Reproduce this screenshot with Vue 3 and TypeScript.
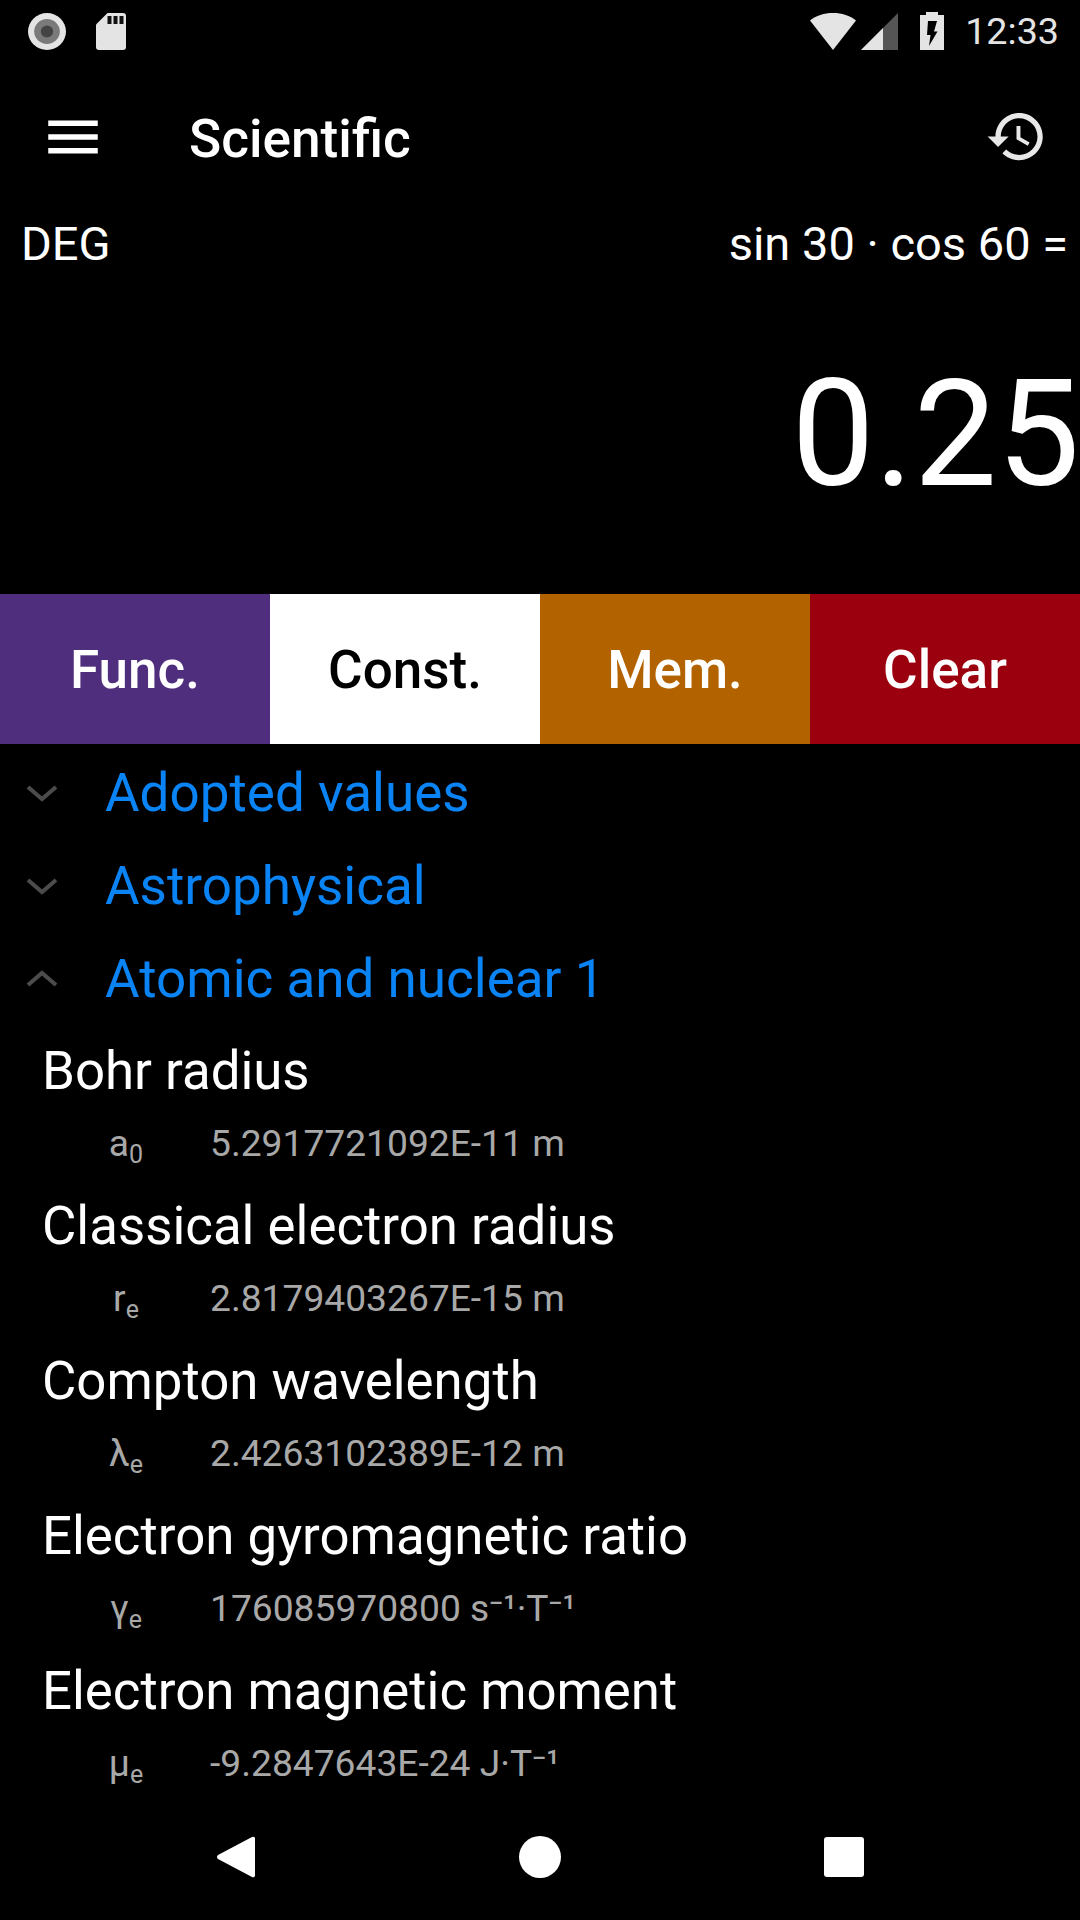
<script setup lang="ts">
interface Constant {
  name: string;
  symbol: string;
  sub: string;
  value: string;
}

const groups = [
  { label: 'Adopted values', open: false },
  { label: 'Astrophysical', open: false },
  { label: 'Atomic and nuclear 1', open: true }
];

const modes = [
  { label: 'Func.', cls: 'func' },
  { label: 'Const.', cls: 'const' },
  { label: 'Mem.', cls: 'mem' },
  { label: 'Clear', cls: 'clear' }
];

const constants: Constant[] = [
  { name: 'Bohr radius', symbol: 'a', sub: '0', value: '5.2917721092E-11 m' },
  { name: 'Classical electron radius', symbol: 'r', sub: 'e', value: '2.8179403267E-15 m' },
  { name: 'Compton wavelength', symbol: 'λ', sub: 'e', value: '2.4263102389E-12 m' },
  { name: 'Electron gyromagnetic ratio', symbol: 'γ', sub: 'e', value: '176085970800 s⁻¹·T⁻¹' },
  { name: 'Electron magnetic moment', symbol: 'μ', sub: 'e', value: '-9.2847643E-24 J·T⁻¹' }
];
</script>

<template>
  <div class="screen">
    <div class="status">
      <svg class="rec" width="38" height="37" viewBox="0 0 37 37" preserveAspectRatio="none">
        <circle cx="18.5" cy="18.5" r="18.5" fill="#e4e4e4" />
        <circle cx="18.5" cy="18.5" r="12.5" fill="#7a7a7a" />
        <circle cx="18.5" cy="18.5" r="6" fill="#444" />
      </svg>
      <svg class="sd" width="30" height="37" viewBox="0 0 30 37">
        <path d="M11.500 0H27a3 3 0 0 1 3 3V34a3 3 0 0 1-3 3H3a3 3 0 0 1-3-3V11.500Z" fill="#e4e4e4" />
        <path d="M11.500 3h4v8h-4zM17.500 3h4v8h-4zM23.500 3h4v8h-4z" fill="#111" />
      </svg>
      <span class="spacer"></span>
      <svg class="wifi" width="46" height="37" viewBox="0 0 46 37">
        <path d="M0 7.500C6 2.500 14 0 23 0s17 2.500 23 7.500L23 37Z" fill="#e4e4e4" />
      </svg>
      <svg class="signal" width="37" height="37" viewBox="0 0 37 37">
        <path d="M37 0V37H0Z" fill="#555" />
        <path d="M22 15V37H0Z" fill="#e4e4e4" />
      </svg>
      <svg class="battery" width="24" height="38" viewBox="0 0 24 38">
        <path d="M6 0h12v3h6v35H0V3h6Z" fill="#e4e4e4" />
        <path d="M8 9H17L14 19.500H17.500L9 34 10.500 23H7Z" fill="#000" />
      </svg>
      <span class="time">12:33</span>
    </div>

    <div class="toolbar">
      <svg class="menu" width="66" height="66" viewBox="0 0 24 24">
        <path d="M3 18h18v-2H3v2zm0-5h18v-2H3v2zm0-7v2h18V6H3z" fill="#fff" />
      </svg>
      <span class="title">Scientific</span>
      <span class="spacer"></span>
      <svg class="history" width="63" height="63" viewBox="0 0 24 24">
        <path d="M13 3c-4.970 0-9 4.030-9 9H1l3.890 3.890.07.14L9 12H6c0-3.870 3.130-7 7-7s7 3.130 7 7-3.130 7-7 7c-1.930 0-3.680-.79-4.940-2.060l-1.420 1.420C8.270 19.990 10.510 21 13 21c4.970 0 9-4.030 9-9s-4.030-9-9-9zm-1 5v5l4.280 2.540.72-1.210-3.500-2.080V8H12z" fill="#e8e8e8" />
      </svg>
    </div>

    <div class="display">
      <div class="info">
        <span>DEG</span>
        <span>sin 30 · cos 60 =</span>
      </div>
      <div class="result">0.25</div>
    </div>

    <div class="modes">
      <div v-for="mode in modes" :key="mode.label" class="mode" :class="mode.cls">{{ mode.label }}</div>
    </div>

    <div class="list">
      <div v-for="group in groups" :key="group.label" class="group">
        <svg class="chevron" width="36" height="24" viewBox="0 0 36 24">
          <path v-if="group.open" d="M4 18 18 6 32 18" />
          <path v-else d="M4 6 18 18 32 6" />
        </svg>
        <span>{{ group.label }}</span>
      </div>
      <div v-for="item in constants" :key="item.name" class="item">
        <div class="name">{{ item.name }}</div>
        <div class="detail">
          <span class="symbol">{{ item.symbol }}<sub>{{ item.sub }}</sub></span>
          <span class="value">{{ item.value }}</span>
        </div>
      </div>
    </div>

    <div class="nav">
      <svg width="38" height="42" viewBox="0 0 38 42">
        <path d="M35 1a2 2 0 0 1 3 2V39a2 2 0 0 1-3 2L1 23a2.500 2.500 0 0 1 0-4Z" fill="#fff" />
      </svg>
      <svg width="42" height="42" viewBox="0 0 42 42">
        <circle cx="21" cy="21" r="21" fill="#fff" />
      </svg>
      <svg width="40" height="40" viewBox="0 0 40 40">
        <rect width="40" height="40" rx="3" fill="#fff" />
      </svg>
    </div>
  </div>
</template>

<style>
body {
  background: #000;
}
</style>

<style scoped>
.screen {
  width: 1080px;
  height: 1920px;
  display: flex;
  flex-direction: column;
  overflow: hidden;
  background: #000;
  color: #fff;
  font-family: Roboto, sans-serif;
}

.spacer {
  flex: 1;
}

.status {
  height: 63px;
  flex-shrink: 0;
  display: flex;
  align-items: flex-start;
  padding: 13px 21px 0 28px;
  box-sizing: border-box;
}

.sd {
  margin-left: 30px;
}

.signal {
  margin-left: 5px;
}

.battery {
  margin-left: 22px;
  margin-top: -1px;
}

.time {
  margin-left: 21px;
  font-size: 37.7px;
  line-height: 37px;
  font-weight: 400;
  color: #e4e4e4;
}

.toolbar {
  height: 147px;
  flex-shrink: 0;
  display: flex;
  align-items: center;
  padding: 0 32px 0 40px;
  box-sizing: border-box;
}

.title {
  margin: 4px 0 0 83px;
  font-size: 53.2px;
  font-weight: 500;
}

.display {
  height: 384px;
  flex-shrink: 0;
  box-sizing: border-box;
  padding: 8px 12px 0 21px;
  display: flex;
  flex-direction: column;
}

.info {
  display: flex;
  justify-content: space-between;
  font-size: 47px;
  line-height: 52px;
  font-weight: 400;
}

.result {
  margin-top: 80px;
  margin-right: -12px;
  text-align: right;
  font-size: 148px;
  line-height: 170px;
  font-weight: 400;
}

.modes {
  height: 150px;
  flex-shrink: 0;
  display: grid;
  grid-template-columns: repeat(4, 1fr);
}

.mode {
  display: flex;
  align-items: center;
  justify-content: center;
  padding-top: 2px;
  box-sizing: border-box;
  font-size: 53px;
  font-weight: 500;
}

.func {
  background: #4f2f7d;
}

.const {
  background: #fff;
  color: #000;
}

.mem {
  background: #b36200;
}

.clear {
  background: #9b000f;
}

.list {
  flex: 1;
  min-height: 0;
  overflow: hidden;
  padding-top: 2px;
  margin-bottom: -30px;
}

.group {
  height: 93px;
  display: flex;
  align-items: center;
  padding-left: 24px;
  font-size: 53px;
  color: #0a84f5;
}

.chevron {
  margin-right: 45px;
}

.chevron path {
  fill: none;
  stroke: #4c4c4c;
  stroke-width: 4;
}

.item {
  height: 155px;
  padding-left: 42px;
}

.name {
  font-size: 52.8px;
  line-height: 93px;
}

.detail {
  display: flex;
  align-items: baseline;
  margin-top: 1px;
  font-size: 37.2px;
  line-height: 48px;
  color: #a8a8a8;
}

.symbol {
  width: 168px;
  text-align: center;
}

.symbol sub {
  font-size: 25px;
  line-height: 0;
  vertical-align: -7px;
}

.nav {
  height: 144px;
  flex-shrink: 0;
  position: relative;
  display: flex;
  align-items: center;
  justify-content: space-between;
  padding: 18px 216px 0 217px;
  box-sizing: border-box;
}
</style>
